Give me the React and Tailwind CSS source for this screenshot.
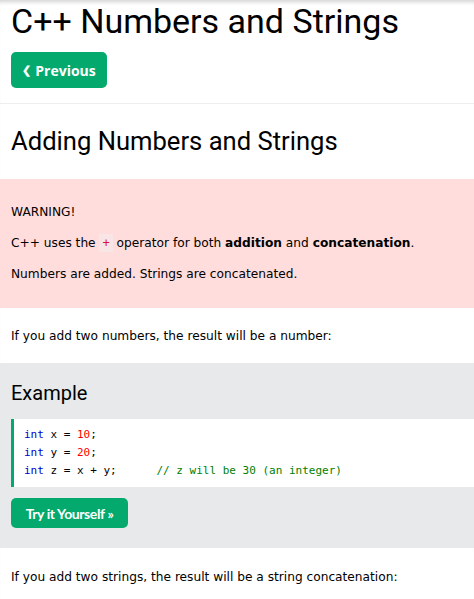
import React from "react";

const seg = "font-['Roboto',sans-serif]";
const mono = "font-['DejaVu_Sans_Mono',monospace]";

export default function App() {
  return (
    <div className="min-h-[599px] bg-white text-black font-['DejaVu_Sans',Verdana,sans-serif] text-[12.2px] shadow-[inset_0_5px_4px_-3px_rgba(0,0,0,0.18)] overflow-hidden">
      <div className="px-[11px]">
        <h1 className={`${seg} text-[34px] leading-[42px] pt-0 text-black`}>C++ Numbers and Strings</h1>
        <button className="mt-[10px] h-[36px] w-[96px] rounded-[5px] bg-[#04AA6D] text-white font-bold text-[14px] font-['Open_Sans',sans-serif] flex items-center justify-center gap-[4px]">
          <span className="text-[11px]">❮</span>
          <span>Previous</span>
        </button>
      </div>
      <div className="mt-[15px] h-px bg-[#eeeeee]"></div>
      <h2 className={`${seg} text-[25.6px] leading-[34px] px-[11px] mt-[20px]`}>Adding Numbers and Strings</h2>
      <div className="mt-[21px] bg-[#ffdddd] px-[11px] pt-[24px] pb-[24px]">
        <p className="leading-[19px]">WARNING!</p>
        <p className="leading-[19px] mt-[12px]">
          C++ uses the <code className={`${mono} text-[#dc143c] bg-[rgba(240,240,240,0.45)] px-[3px] py-[2px] text-[12px]`}>+</code> operator for both <b>addition</b> and <b>concatenation</b>.
        </p>
        <p className="leading-[19px] mt-[12px]">Numbers are added. Strings are concatenated.</p>
      </div>
      <p className="px-[11px] leading-[19px] mt-[19px]">If you add two numbers, the result will be a number:</p>
      <div className="mt-[17px] bg-[#E7E9EB] pt-[17px] pb-[20px]">
        <h2 className={`${seg} text-[20px] leading-[26px] px-[11px]`}>Example</h2>
        <div className="mt-[13px] ml-[11px] bg-white border-l-[3px] border-[#04AA6D] pl-[10px] py-[7px]">
          <pre className={`${mono} text-[11px] leading-[18px]`}>
            <span className="text-[#0000cd]">int</span> x = <span className="text-[#ff0000]">10</span>;{"\n"}
            <span className="text-[#0000cd]">int</span> y = <span className="text-[#ff0000]">20</span>;{"\n"}
            <span className="text-[#0000cd]">int</span> z = x + y;      <span className="text-[#008000]">// z will be 30 (an integer)</span>
          </pre>
        </div>
        <button className="mt-[11px] ml-[11px] h-[30px] w-[117px] rounded-[5px] bg-[#04AA6D] text-white font-bold text-[14px] font-['Lato',sans-serif] tracking-[-0.4px]">
          Try it Yourself »
        </button>
      </div>
      <p className="px-[11px] leading-[19px] mt-[20px]">If you add two strings, the result will be a string concatenation:</p>
    </div>
  );
}
